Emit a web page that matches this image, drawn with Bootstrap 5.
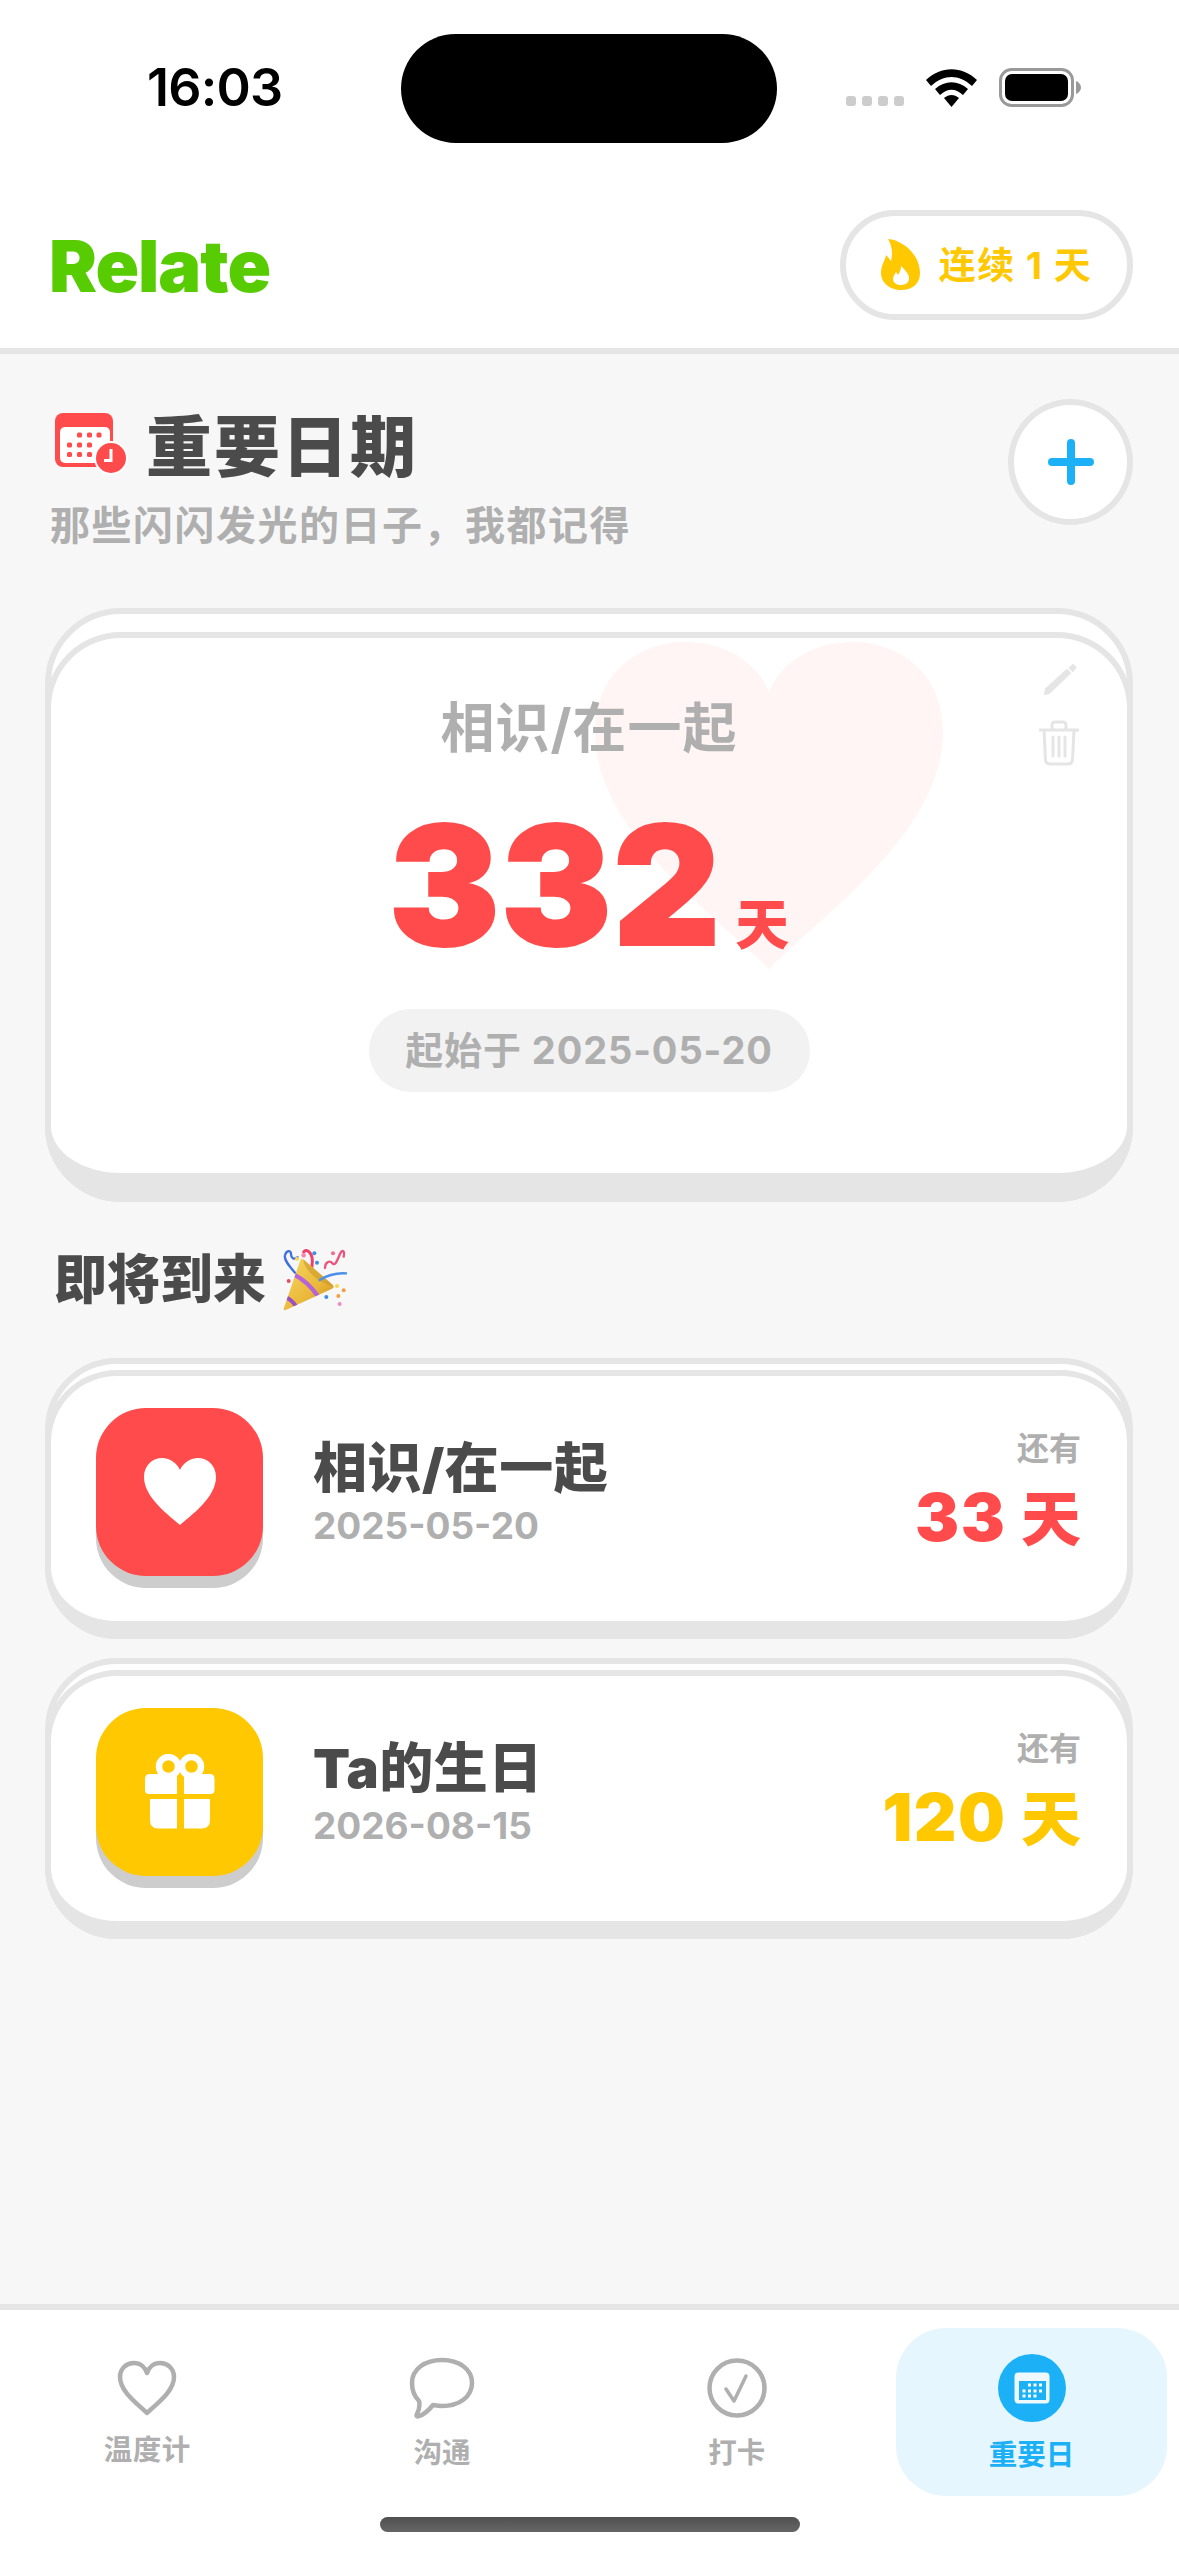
<!DOCTYPE html>
<html lang="zh-CN">
<head>
  <meta charset="UTF-8" />
  <meta name="viewport" content="width=device-width, initial-scale=1.0" />
  <title>Relate</title>
  <link href="https://cdn.jsdelivr.net/npm/bootstrap@5.3.3/dist/css/bootstrap.min.css" rel="stylesheet" />
  <style>
    html, body { margin: 0; background: #fff; }
    body { font-family: Inter, "Noto Sans CJK SC", sans-serif; }
    .phone { width: 1179px; height: 2556px; overflow: hidden; }

    /* status bar */
    .status-bar { height: 174px; padding-left: 147px; }
    .clock { width: 254px; margin-top: 58px; font-size: 52px; line-height: 60px; font-weight: 600; color: #000; letter-spacing: -.8px; }
    .island { width: 376px; height: 109px; margin-top: 34px; background: #000; border-radius: 55px; }
    .sig-dots { margin: 96px 0 0 69px; gap: 6px; }
    .sig-dots span { width: 10px; height: 10px; border-radius: 3px; background: #ccc; }
    .wifi { margin: 69px 0 0 22px; }
    .batt { margin: 68px 0 0 22px; }

    /* top bar */
    .top-bar { height: 180px; padding: 36px 46px 0 50px; border-bottom: 6px solid #e5e5e5; background: #fff; align-items: flex-start; }
    .brand { font-size: 72px; line-height: 110px; font-weight: 900; color: #58cc02; letter-spacing: -1px; margin: 1px 0 0 -1px; }
    .streak { width: 293px; height: 110px; border: 6px solid #e5e5e5; border-radius: 55px; gap: 18px; color: #ffc800; font-size: 37px; font-weight: 700; letter-spacing: 1.5px; }
    .streak span { margin-top: 2px; }

    /* content */
    .content { background: #f7f7f7; padding: 45px 46px 0 45px; }
    .head-row { margin-bottom: 57px; height: 152px; }
    .head-title { margin: 8px 0 0 10px; height: 80px; gap: 18px; }
    .head-title svg { margin-bottom: 6px; }
    .head-title h1 { margin: 0; font-size: 66px; line-height: 80px; font-weight: 900; color: #4b4b4b; letter-spacing: 2px; }
    .head-sub { margin: 14px 0 0 5px; font-size: 40px; line-height: 50px; font-weight: 700; color: #afafaf; letter-spacing: 1.5px; }
    .add-btn { width: 125px; height: 126px; border: 6px solid #e5e5e5; border-radius: 50%; background: #fff; }

    /* 3d-ish cards: outer shell + inner face, same box edges */
    .shell { background: #fff; border: 6px solid #e5e5e5; }
    .face { background: #fff; border: solid #e5e5e5; border-width: 6px 6px 0; margin: 0 -6px -6px; }
    .shell-big { border-radius: 76px; padding-top: 18px; }
    .shell-big .face { border-bottom-width: 29px; border-radius: 76px; height: 570px; padding-top: 56px; }
    .shell-row { border-radius: 72px; padding-top: 6px; height: 281px; }
    .shell-row + .shell-row { margin-top: 19px; }
    .shell-row .face { border-bottom-width: 18px; border-radius: 72px; height: 269px; padding: 0 46px 10px 45px; }

    .bg-heart { left: 544px; top: 4px; }
    .edit-ico { right: 49px; top: 24px; }
    .trash-ico { right: 48px; top: 82px; }
    .big-name { font-size: 54px; line-height: 70px; font-weight: 700; color: #afafaf; letter-spacing: 1px; }
    .big-count { margin-top: 36px; height: 170px; line-height: 170px; color: #ff4b4b; font-weight: 900; font-size: 166px; letter-spacing: 1px; -webkit-text-stroke: 2px #ff4b4b; }
    .big-count small { font-size: 54px; font-weight: 900; letter-spacing: 0; margin-left: 14px; -webkit-text-stroke: 0; }
    .since { margin-top: 39px; width: 441px; height: 83px; line-height: 83px; border-radius: 42px; background: #f2f2f2; font-size: 38px; font-weight: 700; color: #afafaf; letter-spacing: .9px; }

    .up-title { margin: 43px 0 43px 9px; height: 70px; gap: 16px; font-size: 53px; line-height: 70px; font-weight: 900; color: #4b4b4b; }
    .up-title svg { margin-top: -4px; }

    .tile { width: 167px; height: 168px; margin: -2px 50px 2px 0; border-radius: 50px; }
    .tile-red { background: #ff4b4b; box-shadow: 0 12px 0 #cdcdcd; }
    .tile-gold { background: #ffc800; box-shadow: 0 12px 0 #cdcdcd; }
    .row-name { font-size: 54px; line-height: 64px; font-weight: 900; color: #4b4b4b; letter-spacing: .5px; }
    .row-date { margin-top: 0; font-size: 37px; line-height: 50px; font-weight: 700; color: #afafaf; }
    .row-left { font-size: 32px; line-height: 40px; font-weight: 700; color: #afafaf; margin-bottom: 8px; }
    .row-num { font-size: 66px; line-height: 80px; font-weight: 900; letter-spacing: 1.500px; }
    .row-num small { font-size: 60px; font-weight: 900; letter-spacing: 0; }
    .c-red { color: #ff4b4b; }
    .c-gold { color: #ffc800; }

    /* bottom tabs */
    .tabs { height: 252px; border-top: 6px solid #e5e5e5; background: #fff; padding-top: 18px; }
    .tab-item { width: 25%; margin: 0 12px; height: 168px; padding-top: 26px; border-radius: 50px; }
    .tab-ico { height: 68px; }
    .tab-label { margin-top: 15px; font-size: 28.5px; line-height: 32px; font-weight: 700; color: #afafaf; }
    .tab-first .tab-label { margin-top: 12px; letter-spacing: .5px; }
    .tab-on { background: #e5f6fe; }
    .tab-on .tab-label { color: #1cb0f6; margin-top: 17px; }
    .home-bar { width: 420px; height: 15px; margin: 21px auto 0; border-radius: 8px; background: linear-gradient(#505050, #666); }
  </style>
</head>
<body>
  <div class="phone d-flex flex-column">

    <!-- Status bar -->
    <div class="status-bar d-flex align-items-start flex-shrink-0">
      <div class="clock">16:03</div>
      <div class="island"></div>
      <div class="sig-dots d-flex"><span></span><span></span><span></span><span></span></div>
      <svg class="wifi" width="51" height="38" viewBox="0 0 51 38">
        <path d="M0 11 C15 -3.500 36 -3.500 51 11 L46 17 C33 5 18 5 5 17Z" fill="#000"/>
        <path d="M9 20 C19 11 32 11 42 20 L37 26 C29 19 22 19 14 26Z" fill="#000"/>
        <path d="M18 29 C23 25 28 25 33 29 L25.500 38Z" fill="#000"/>
      </svg>
      <svg class="batt" width="82" height="39" viewBox="0 0 82 39">
        <rect x="1.500" y="1.500" width="72" height="36" rx="11" fill="none" stroke="#999" stroke-width="3"/>
        <rect x="6" y="6" width="63" height="27" rx="7" fill="#000"/>
        <path d="M77 13 C80 14 82 17 82 19.500 C82 22 80 25 77 26Z" fill="#999"/>
      </svg>
    </div>

    <!-- Header -->
    <header class="top-bar d-flex justify-content-between flex-shrink-0">
      <div class="brand">Relate</div>
      <div class="streak d-flex align-items-center justify-content-center">
        <svg width="40" height="52" viewBox="0 0 40 52">
          <path d="M7 0 C22 1 39 16 39 34 C39 45 31 51 20 51 C9 51 0 44 0 34 C0 26 4 22 5 16 C8 19 9 21 10 22 C12 15 11 6 7 0Z" fill="#ffc800"/>
          <path d="M20 27 C25 32 28 35 28 39 C28 44 24 46 20 46 C16 46 12 44 12 40 C12 37 14 35 15 33 L17 36 C19 33 20 30 20 27Z" fill="#fff"/>
        </svg>
        <span>连续 1 天</span>
      </div>
    </header>

    <!-- Content -->
    <main class="content flex-grow-1">
      <div class="head-row d-flex justify-content-between">
        <div>
          <div class="head-title d-flex align-items-center">
            <svg width="73" height="62" viewBox="0 0 73 62">
              <rect x="0" y="0" width="58" height="54" rx="8" fill="#ff4b4b"/>
              <rect x="5" y="14" width="50" height="36" rx="5" fill="#fff"/>
              <g fill="#ff4b4b">
                <rect x="22" y="19.500" width="5" height="5" rx="1.500"/><rect x="32" y="19.500" width="5" height="5" rx="1.500"/><rect x="41.500" y="19.500" width="5" height="5" rx="1.500"/>
                <rect x="12" y="29.500" width="5" height="5" rx="1.500"/><rect x="22" y="29.500" width="5" height="5" rx="1.500"/><rect x="32" y="29.500" width="5" height="5" rx="1.500"/>
                <rect x="12" y="39" width="5" height="5" rx="1.500"/><rect x="22" y="39" width="5" height="5" rx="1.500"/><rect x="32" y="39" width="5" height="5" rx="1.500"/>
              </g>
              <circle cx="56" cy="45" r="17" fill="#fff"/>
              <circle cx="56" cy="45" r="15" fill="#ff4b4b"/>
              <path d="M56 36 V47.500 H49" fill="none" stroke="#fff" stroke-width="3"/>
            </svg>
            <h1>重要日期</h1>
          </div>
          <div class="head-sub">那些闪闪发光的日子，我都记得</div>
        </div>
        <div class="add-btn d-flex align-items-center justify-content-center">
          <svg width="46" height="46" viewBox="0 0 46 46"><path d="M23 4 V42 M4 23 H42" stroke="#1cb0f6" stroke-width="8" stroke-linecap="round"/></svg>
        </div>
      </div>

      <!-- Anniversary card -->
      <section class="shell shell-big">
        <div class="face position-relative text-center d-flex flex-column align-items-center">
          <svg class="bg-heart position-absolute" width="348" height="327" viewBox="0 0 348 327">
            <path d="M174 327 C120 272 0 190 0 90 C0 30 45 0 90 0 C130 0 162 20 174 50 C186 20 218 0 258 0 C303 0 348 30 348 90 C348 190 228 272 174 327Z" fill="#fff5f4"/>
          </svg>
          <svg class="edit-ico position-absolute" width="36" height="34" viewBox="0 0 36 34">
            <path d="M3 32 L4 27 L25 8 L28 11 L7 31Z" fill="#e5e5e5" stroke="#e5e5e5" stroke-width="2" stroke-linejoin="round"/>
            <path d="M28 6 L31 3 L33.500 5.500 L31 9Z" fill="#e5e5e5" stroke="#e5e5e5" stroke-width="2" stroke-linejoin="round"/>
          </svg>
          <svg class="trash-ico position-absolute" width="40" height="46" viewBox="0 0 40 46">
            <path d="M1 10 H39 M13 10 V5 Q13 2 16 2 H24 Q27 2 27 5 V10 M5 10 L6.500 40 Q7 44 11 44 H29 Q33 44 33.500 40 L35 10 M14 17 V36 M20 17 V36 M26 17 V36" fill="none" stroke="#e5e5e5" stroke-width="3" stroke-linecap="round"/>
          </svg>
          <div class="big-name position-relative">相识/在一起</div>
          <div class="big-count position-relative">332<small>天</small></div>
          <div class="since position-relative">起始于 2025-05-20</div>
        </div>
      </section>

      <div class="up-title d-flex align-items-center">
        <span>即将到来</span>
        <svg width="65" height="65" viewBox="65 50 195 195">
          <defs>
            <linearGradient id="coneFill" x1="0" y1="0" x2="1" y2="1">
              <stop offset="0" stop-color="#f8d862"/><stop offset=".6" stop-color="#eab83a"/><stop offset="1" stop-color="#c98d1e"/>
            </linearGradient>
            <clipPath id="coneClip"><path d="M70 238 L120 92 Q125 85 135 95 L215 165 Q225 175 215 178 L78 241 Q68 245 70 238Z"/></clipPath>
          </defs>
          <path d="M104 130 C88 112 70 92 74 78 C78 62 92 62 92 74 C92 86 100 92 112 84" fill="none" stroke="#3f6fe0" stroke-width="7" stroke-linecap="round"/>
          <path d="M152 126 C158 100 158 80 148 70 C142 62 134 62 130 68" fill="none" stroke="#ef3f6a" stroke-width="9" stroke-linecap="round"/>
          <path d="M194 116 C194 98 208 92 216 102 C226 112 232 88 240 72 C246 60 254 64 250 82" fill="none" stroke="#e9557f" stroke-width="7" stroke-linecap="round"/>
          <path d="M70 238 L120 92 Q125 85 135 95 L215 165 Q225 175 215 178 L78 241 Q68 245 70 238Z" fill="url(#coneFill)"/>
          <g clip-path="url(#coneClip)">
            <path d="M100 135 C130 150 155 175 172 200" fill="none" stroke="#b662d8" stroke-width="13"/>
            <path d="M78 205 C90 210 100 220 108 232" fill="none" stroke="#9a4fc6" stroke-width="12"/>
            <path d="M130 90 C125 110 165 160 222 172 L225 160 L140 85Z" fill="#c9962a" opacity=".55"/>
          </g>
          <path d="M178 152 C200 138 228 130 258 132" fill="none" stroke="#4a8fe8" stroke-width="7" stroke-linecap="round"/>
          <circle cx="110" cy="88" r="6" fill="#f7d94c"/><circle cx="130" cy="78" r="7" fill="#f58ab0"/><circle cx="162" cy="72" r="6" fill="#3f8fe0"/>
          <circle cx="170" cy="100" r="6" fill="#3f8fe0"/><circle cx="218" cy="72" r="6" fill="#ee6f8f"/><circle cx="85" cy="155" r="6" fill="#e14d5e"/>
          <circle cx="230" cy="170" r="6" fill="#f7d94c"/><circle cx="250" cy="183" r="6" fill="#f0a040"/><circle cx="234" cy="200" r="6" fill="#f0a040"/>
          <circle cx="198" cy="203" r="6" fill="#3f8fe0"/><circle cx="238" cy="224" r="6" fill="#f08ac0"/>
        </svg>
      </div>

      <!-- Upcoming list -->
      <section class="shell shell-row">
        <div class="face d-flex align-items-center">
          <div class="tile tile-red d-flex align-items-center justify-content-center flex-shrink-0">
            <svg width="72" height="67" viewBox="0 0 72 67"><path d="M36 67 C26 58 0 40 0 19 C0 7 9 0 18 0 C26 0 33 5 36 12 C39 5 46 0 54 0 C63 0 72 7 72 19 C72 40 46 58 36 67Z" fill="#fff"/></svg>
          </div>
          <div class="flex-grow-1">
            <div class="row-name">相识/在一起</div>
            <div class="row-date">2025-05-20</div>
          </div>
          <div class="text-end">
            <div class="row-left">还有</div>
            <div class="row-num c-red">33 <small>天</small></div>
          </div>
        </div>
      </section>
      <section class="shell shell-row">
        <div class="face d-flex align-items-center">
          <div class="tile tile-gold d-flex align-items-center justify-content-center flex-shrink-0">
            <svg width="70" height="75" viewBox="0 0 70 75">
              <circle cx="23.500" cy="12.500" r="9.500" fill="none" stroke="#fff" stroke-width="6.500"/>
              <circle cx="46.500" cy="12.500" r="9.500" fill="none" stroke="#fff" stroke-width="6.500"/>
              <path d="M5 20 H32 V40 H4 Q0 40 0 36 V25 Q0 20 5 20Z M39 20 H65 Q69.500 20 69.500 25 V36 Q69.500 40 65.500 40 H39Z" fill="#fff"/>
              <path d="M5 45 H32 V74.500 H13 Q5 74.500 5 66Z M39 45 H65 V66 Q65 74.500 57 74.500 H39Z" fill="#fff"/>
            </svg>
          </div>
          <div class="flex-grow-1">
            <div class="row-name">Ta的生日</div>
            <div class="row-date">2026-08-15</div>
          </div>
          <div class="text-end">
            <div class="row-left">还有</div>
            <div class="row-num c-gold">120 <small>天</small></div>
          </div>
        </div>
      </section>
    </main>

    <!-- Bottom nav -->
    <nav class="tabs flex-shrink-0">
      <div class="d-flex">
        <div class="tab-item tab-first d-flex flex-column align-items-center">
          <div class="tab-ico d-flex align-items-center">
            <svg width="60" height="56" viewBox="0 0 60 56"><path d="M30 53 C22 45 3 32 3 17 C3 8 10 3 17 3 C23 3 28 7 30 13 C32 7 37 3 43 3 C50 3 57 8 57 17 C57 32 38 45 30 53Z" fill="none" stroke="#afafaf" stroke-width="4.500" stroke-linejoin="round"/></svg>
          </div>
          <div class="tab-label">温度计</div>
        </div>
        <div class="tab-item d-flex flex-column align-items-center">
          <div class="tab-ico d-flex align-items-center">
            <svg width="66" height="62" viewBox="0 0 66 62"><path d="M33 3 C50 3 63 12 63 26 C63 40 50 49 33 49 C30 49 27 48.500 24 48 C20 53 14 58 10 59 C8 60 7 59 8 57 C10 53 11 48 10 44 C5 39 3 33 3 26 C3 12 16 3 33 3Z" fill="none" stroke="#afafaf" stroke-width="4.500" stroke-linejoin="round"/></svg>
          </div>
          <div class="tab-label">沟通</div>
        </div>
        <div class="tab-item d-flex flex-column align-items-center">
          <div class="tab-ico d-flex align-items-center">
            <svg width="60" height="60" viewBox="0 0 60 60"><circle cx="30" cy="30" r="27.500" fill="none" stroke="#afafaf" stroke-width="4.500"/><path d="M19 31 L27 43 L39 18" fill="none" stroke="#afafaf" stroke-width="3.500" stroke-linecap="round" stroke-linejoin="round"/></svg>
          </div>
          <div class="tab-label">打卡</div>
        </div>
        <div class="tab-item tab-on d-flex flex-column align-items-center">
          <div class="tab-ico">
            <svg width="68" height="68" viewBox="0 0 68 68">
              <circle cx="34" cy="34" r="34" fill="#1cb0f6"/>
              <rect x="16.500" y="18.500" width="35" height="31" rx="4" fill="#fff" opacity=".92"/>
              <rect x="21" y="27" width="27" height="19" fill="#1cb0f6"/>
              <g fill="#fff">
                <rect x="30" y="29.500" width="3" height="3"/><rect x="35.500" y="29.500" width="3" height="3"/><rect x="41" y="29.500" width="3" height="3"/>
                <rect x="24.500" y="35.500" width="3" height="3"/><rect x="30" y="35.500" width="3" height="3"/><rect x="35.500" y="35.500" width="3" height="3"/><rect x="41" y="35.500" width="3" height="3"/>
                <rect x="24.500" y="40.500" width="3" height="3"/><rect x="30" y="40.500" width="3" height="3"/><rect x="35.500" y="40.500" width="3" height="3"/>
              </g>
            </svg>
          </div>
          <div class="tab-label">重要日</div>
        </div>
      </div>
      <div class="home-bar"></div>
    </nav>
  </div>
  <script src="https://cdn.jsdelivr.net/npm/bootstrap@5.3.3/dist/js/bootstrap.bundle.min.js"></script>
</body>
</html>
